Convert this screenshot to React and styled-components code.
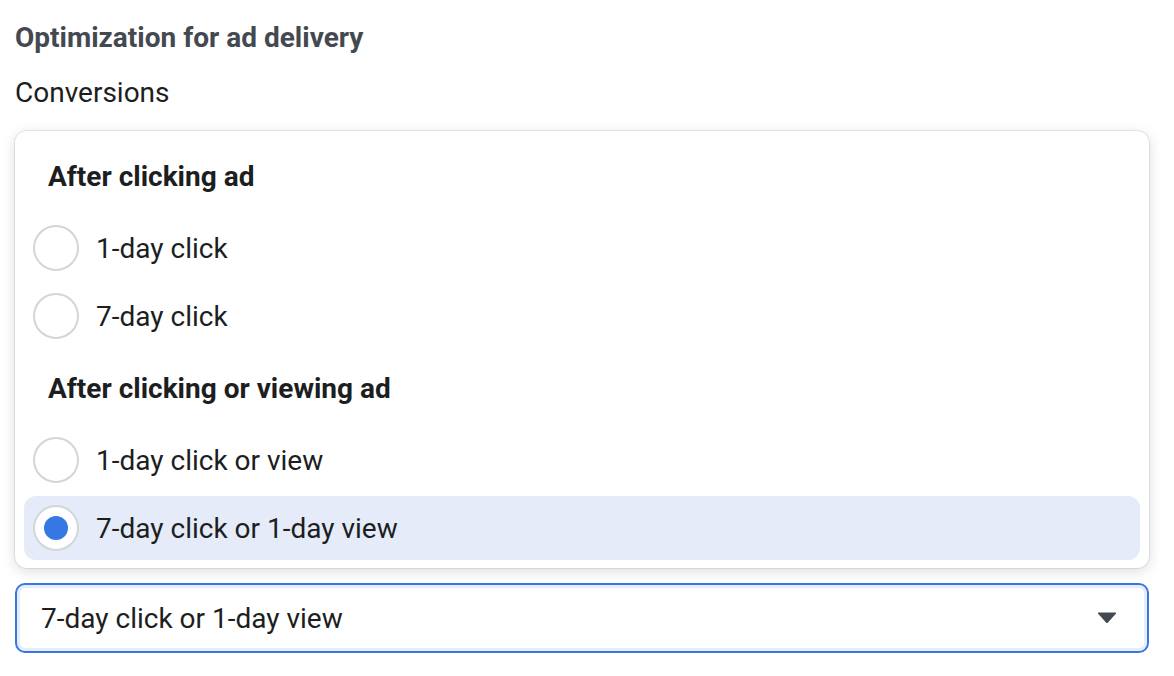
import React, { useState } from "react";
import styled, { createGlobalStyle, css } from "styled-components";

const GlobalStyle = createGlobalStyle`
  html, body {
    margin: 0;
    padding: 0;
    background: #ffffff;
  }
  body {
    font-family: Roboto, "Liberation Sans", Arial, sans-serif;
    color: #1c1e21;
  }
`;

const Page = styled.div`
  padding: 20px 25px 20px 15px;
  display: flex;
  flex-direction: column;
`;

const Title = styled.div`
  font-size: 28px;
  font-weight: 700;
  line-height: 36px;
  color: #444950;
`;

const Value = styled.div`
  margin-top: 19px;
  font-size: 28px;
  line-height: 36px;
  color: #1c1e21;
`;

const Menu = styled.div`
  margin-top: 20px;
  padding: 9px 9px 8px;
  display: flex;
  flex-direction: column;
  gap: 4px;
  background: #ffffff;
  border-radius: 12px;
  box-shadow: 0 0 0 1px rgba(0, 0, 0, 0.08), 0 3px 14px rgba(0, 0, 0, 0.14);
`;

const GroupHeader = styled.div`
  height: 72px;
  display: flex;
  align-items: center;
  padding-left: 24px;
  font-size: 28px;
  font-weight: 700;
  color: #1c1e21;
`;

const Option = styled.div`
  height: 64px;
  display: flex;
  align-items: center;
  gap: 17px;
  padding-left: 9px;
  border-radius: 12px;
  font-size: 28px;
  cursor: pointer;
  ${({ $active }) =>
    $active &&
    css`
      background: #e5ebf9;
    `}
`;

const Radio = styled.span`
  box-sizing: border-box;
  width: 46px;
  height: 46px;
  border-radius: 50%;
  border: 2px solid #d3d5d9;
  background: #ffffff;
  display: flex;
  align-items: center;
  justify-content: center;
  flex-shrink: 0;
  &::after {
    content: "";
    width: 24px;
    height: 24px;
    border-radius: 50%;
    background: ${({ $checked }) => ($checked ? "#3578e5" : "transparent")};
  }
`;

const Select = styled.div`
  margin-top: 15px;
  box-sizing: border-box;
  height: 70px;
  display: flex;
  align-items: center;
  justify-content: space-between;
  padding: 0 30px 0 24px;
  border: 2px solid #3b76e0;
  border-radius: 10px;
  box-shadow: inset 0 0 0 3px #e6edfb;
  background: #ffffff;
  font-size: 28px;
  color: #1c1e21;
`;

const Caret = () => (
  <svg width="20" height="12" viewBox="0 0 20 12">
    <path d="M1 1.5 Q0.5 0.5 2 0.5 H18 Q19.5 0.5 19 1.5 L11 10.5 Q10 11.5 9 10.5 Z" fill="#444950" />
  </svg>
);

const groups = [
  {
    label: "After clicking ad",
    options: ["1-day click", "7-day click"],
  },
  {
    label: "After clicking or viewing ad",
    options: ["1-day click or view", "7-day click or 1-day view"],
  },
];

export default function App() {
  const [selected, setSelected] = useState("7-day click or 1-day view");

  return (
    <Page>
      <GlobalStyle />
      <Title>Optimization for ad delivery</Title>
      <Value>Conversions</Value>
      <Menu>
        {groups.map((group) => (
          <React.Fragment key={group.label}>
            <GroupHeader>{group.label}</GroupHeader>
            {group.options.map((opt) => (
              <Option
                key={opt}
                $active={opt === selected}
                onClick={() => setSelected(opt)}
              >
                <Radio $checked={opt === selected} />
                {opt}
              </Option>
            ))}
          </React.Fragment>
        ))}
      </Menu>
      <Select>
        {selected}
        <Caret />
      </Select>
    </Page>
  );
}
